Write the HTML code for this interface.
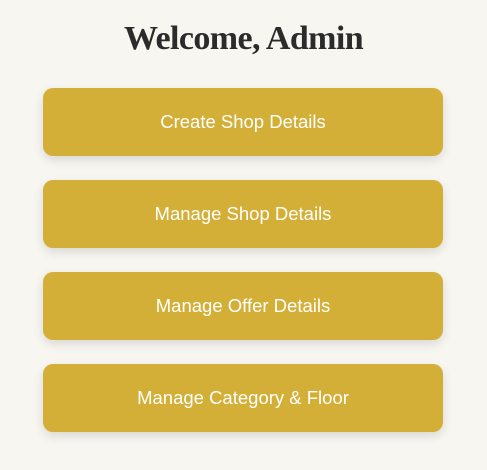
<!DOCTYPE html>
<html><head><style>
body{margin:0;width:487px;height:470px;background:#f7f6f1;font-family:"Liberation Sans",sans-serif;overflow:hidden}
h1{margin:0;position:absolute;top:20px;left:0;width:487px;text-align:center;font-family:"Liberation Serif",serif;font-size:34px;font-weight:bold;color:#2b2b2b;letter-spacing:-0.6px}
.b{position:absolute;left:43px;width:400px;height:68px;background:#d4af37;border-radius:10px;color:#fff;font-size:18.5px;display:flex;align-items:center;justify-content:center;box-shadow:0 4px 10px rgba(0,0,0,0.12)}
</style></head><body>
<h1>Welcome, Admin</h1>
<div class="b" style="top:88px">Create Shop Details</div>
<div class="b" style="top:180px">Manage Shop Details</div>
<div class="b" style="top:272px">Manage Offer Details</div>
<div class="b" style="top:364px">Manage Category &amp; Floor</div>
</body></html>
